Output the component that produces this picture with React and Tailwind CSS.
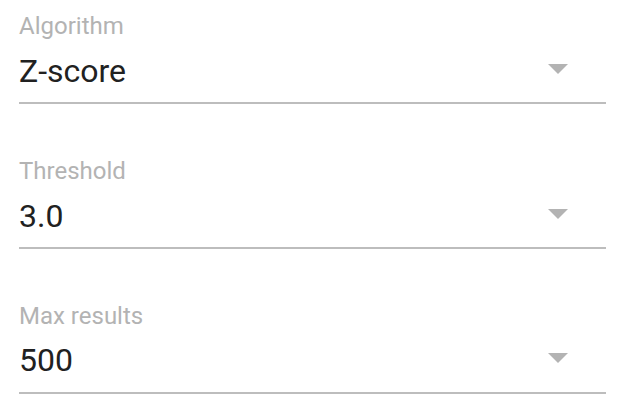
export default function App() {
  const rows = [
    { label: "Algorithm", value: "Z-score" },
    { label: "Threshold", value: "3.0" },
    { label: "Max results", value: "500" },
  ];
  return (
    <div
      className="w-[618px] h-[406px] bg-white pl-[19px] pr-[12px] overflow-hidden"
      style={{ fontFamily: "Roboto, 'Liberation Sans', sans-serif" }}
    >
      {rows.map((r, i) => (
        <div key={i} className={i === 0 ? "h-[145px] flex flex-col" : "h-[144.5px] flex flex-col"}>
          <div className="pt-[14px] text-[24px] leading-[24px] text-[#b3b3b3]">{r.label}</div>
          <div className="mt-[12.5px] flex items-center justify-between">
            <span className="text-[32px] leading-[40px] text-[#212121]">{r.value}</span>
            <svg width="20" height="10" viewBox="0 0 20 10" className="mr-[38px] -mt-[4px]">
              <polygon points="0,0 20,0 10,10" fill="#b3b3b3" />
            </svg>
          </div>
          <div className="mt-[11.5px] h-[2px] bg-[#bdbdbd]" />
        </div>
      ))}
    </div>
  );
}
